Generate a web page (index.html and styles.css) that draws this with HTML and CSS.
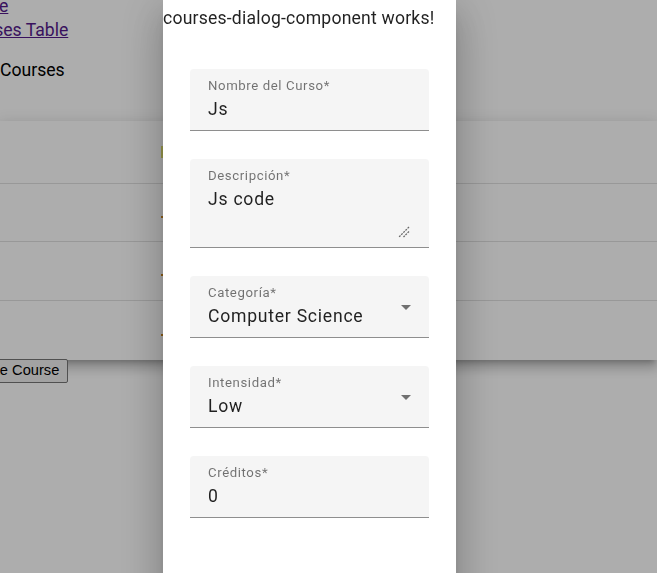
FILE: index.html
```html
<!DOCTYPE html>
<html lang="es">
<head>
<meta charset="utf-8">
<title>Courses</title>
<link rel="stylesheet" href="styles.css">
</head>
<body>
<div class="page">
  <nav class="nav">
    <a class="link link-home" href="#">Home</a>
    <a class="link link-table" href="#">Courses Table</a>
  </nav>
  <h2 class="heading">Courses</h2>
  <div class="table">
    <div class="row row-header"><span class="mark mark-green"></span></div>
    <div class="row row-a"><span class="mark mark-orange"></span></div>
    <div class="row row-b"><span class="mark mark-orange"></span></div>
    <div class="row row-c"><span class="mark mark-orange"></span></div>
  </div>
  <button class="create-btn" type="button">Create Course</button>
</div>

<div class="backdrop"></div>

<div class="dialog">
  <p class="dialog-title">courses-dialog-component works!</p>
  <form class="form">
    <div class="field">
      <div class="field-text">
        <span class="label">Nombre del Curso*</span>
        <span class="value">Js</span>
      </div>
    </div>
    <div class="field field-area">
      <div class="field-text">
        <span class="label">Descripción*</span>
        <span class="value">Js code</span>
      </div>
      <svg class="resize" width="12" height="12" viewBox="0 0 12 12" aria-hidden="true">
        <line x1="11" y1="1" x2="1" y2="11" stroke="#6a6a6a" stroke-width="1.3" stroke-dasharray="2 1"/>
        <line x1="11" y1="5.5" x2="5.5" y2="11" stroke="#6a6a6a" stroke-width="1.3" stroke-dasharray="2 1"/>
      </svg>
    </div>
    <div class="field">
      <div class="field-text">
        <span class="label">Categoría*</span>
        <span class="value">Computer Science</span>
      </div>
      <span class="arrow"></span>
    </div>
    <div class="field">
      <div class="field-text">
        <span class="label">Intensidad*</span>
        <span class="value">Low</span>
      </div>
      <span class="arrow"></span>
    </div>
    <div class="field">
      <div class="field-text">
        <span class="label">Créditos*</span>
        <span class="value">0</span>
      </div>
    </div>
  </form>
</div>
</body>
</html>
```

FILE: styles.css
```css
html, body {
  margin: 0;
  padding: 0;
  background: #ffffff;
  overflow: hidden;
  height: 100%;
}

body {
  font-family: Roboto, "Noto Sans", sans-serif;
  color: #000;
}

.page {
  display: flex;
  flex-direction: column;
  align-items: flex-start;
}

.nav {
  display: flex;
  flex-direction: column;
  align-items: flex-start;
  margin-top: -6px;
}

.link {
  font-size: 17.6px;
  line-height: 24px;
  color: #551a8b;
  text-decoration: underline;
}

.link-home {
  margin-left: -39px;
}

.link-table {
  margin-left: -43px;
}

.heading {
  margin: 16px 0 0 0;
  font-size: 17.6px;
  line-height: 24px;
  font-weight: 400;
  color: #000;
}

.table {
  margin-top: 39px;
  align-self: stretch;
  background: #fff;
  box-shadow: 0 5px 5px -3px rgba(0,0,0,.2), 0 8px 10px 1px rgba(0,0,0,.14), 0 3px 14px 2px rgba(0,0,0,.12);
  display: flex;
  flex-direction: column;
}

.row {
  display: flex;
  align-items: center;
  padding-left: 161px;
  border-bottom: 1px solid rgba(0,0,0,.12);
  box-sizing: border-box;
}

.row-header { height: 63px; }
.row-a { height: 58px; }
.row-b { height: 59px; }
.row-c { height: 59px; border-bottom: none; }

.mark {
  display: block;
  width: 2px;
}

.mark-green {
  height: 12px;
  background: #e0e070;
}

.mark-orange {
  height: 2px;
  background: #d08a20;
  margin-top: 8px;
}

.create-btn {
  margin: -1px 0 0 -44px;
  font-family: "Liberation Sans", Arial, sans-serif;
  font-size: 14.67px;
  line-height: 17px;
  padding: 2px 8px 3px 7px;
  background: #efefef;
  color: #000;
  border: 1px solid #767676;
  border-radius: 2px;
}

.backdrop {
  position: fixed;
  inset: 0;
  background: rgba(0,0,0,.32);
}

.dialog {
  position: fixed;
  left: 163px;
  top: -4px;
  width: 293px;
  height: 640px;
  background: #fff;
  border-radius: 4px;
  box-shadow: 0 11px 15px -7px rgba(0,0,0,.2), 0 24px 38px 3px rgba(0,0,0,.14), 0 9px 46px 8px rgba(0,0,0,.12);
}

.dialog-title {
  margin: 10px 0 0 0;
  font-size: 17.6px;
  line-height: 24px;
  letter-spacing: 0.2px;
  color: rgba(0,0,0,.87);
  white-space: nowrap;
}

.form {
  margin-top: 39px;
  padding: 0 27px;
  display: flex;
  flex-direction: column;
  gap: 28px;
}

.field {
  height: 62px;
  box-sizing: border-box;
  background: #f5f5f5;
  border-radius: 4px 4px 0 0;
  border-bottom: 1px solid rgba(0,0,0,.42);
  padding: 9px 18px 0 18px;
  display: flex;
  justify-content: space-between;
  align-items: flex-start;
}

.field-area {
  height: 89px;
}

.field-text {
  display: flex;
  flex-direction: column;
}

.label {
  font-size: 13.2px;
  line-height: 16px;
  color: rgba(0,0,0,.54);
  letter-spacing: 0.6px;
  white-space: nowrap;
}

.value {
  margin-top: 3px;
  font-size: 17.6px;
  line-height: 24px;
  color: rgba(0,0,0,.87);
  letter-spacing: 0.75px;
  white-space: nowrap;
}

.arrow {
  width: 0;
  height: 0;
  margin-top: 20px;
  border-left: 5.5px solid transparent;
  border-right: 5.5px solid transparent;
  border-top: 5.5px solid rgba(0,0,0,.54);
}

.resize {
  align-self: flex-end;
  margin-bottom: 9px;
  margin-right: 1px;
}
```
